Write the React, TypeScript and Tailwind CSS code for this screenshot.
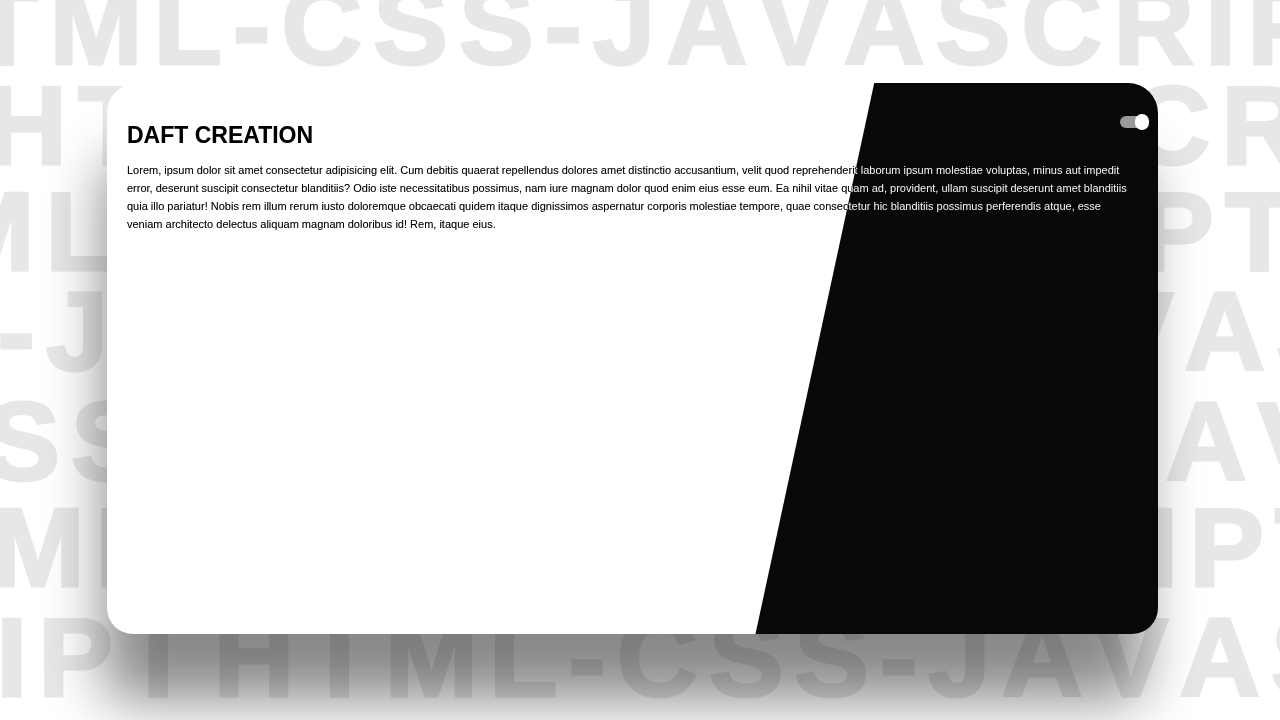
import { useState } from 'react';
import clsx from 'clsx';

const FULL = 'HTML-CSS-JAVASCRIPT';

const rows = [
  { parts: [FULL], className: '-ml-[122px] mb-5' },
  { parts: [FULL], className: '-ml-[14px] mb-[26px]' },
  { parts: [FULL], className: '-ml-[230px] mb-5' },
  { parts: [FULL, 'JAVASCRIPT'], className: '-ml-[669px] mb-[30px] gap-[68px]' },
  { parts: [FULL, 'JAVASCRIPT'], className: '-ml-[510px] mb-[26px] gap-[68px]' },
  { parts: [FULL], className: '-ml-[180px] mb-[30px]' },
  { parts: ['JAVASCRIPT', FULL], className: '-ml-[616px] gap-[10px]' },
];

function Backdrop() {
  return (
    <div
      aria-hidden="true"
      className="absolute inset-0 overflow-hidden select-none flex flex-col -mt-[14px] text-[#e7e7e7] font-bold text-[112px] leading-[80px] tracking-[11px] [font-kerning:none] [-webkit-text-stroke:3px_#e7e7e7] [stroke-linejoin:round]"
    >
      {rows.map((row, i) => (
        <div key={i} className={clsx('flex whitespace-nowrap', row.className)}>
          {row.parts.map((part, j) => (
            <span key={j}>{part}</span>
          ))}
        </div>
      ))}
    </div>
  );
}

function ThemeToggle({
  checked,
  onChange,
}: {
  checked: boolean;
  onChange: (checked: boolean) => void;
}) {
  return (
    <input
      type="checkbox"
      role="switch"
      aria-label="Dark mode"
      checked={checked}
      onChange={(e) => onChange(e.target.checked)}
      className="appearance-none relative shrink-0 cursor-pointer w-7 h-3 rounded-full bg-[#999] before:absolute before:-top-0.5 before:left-0 before:w-3.5 before:h-4 before:rounded-full before:bg-white before:transition-transform checked:before:translate-x-[15px]"
    />
  );
}

export default function App() {
  const [dark, setDark] = useState(true);

  return (
    <main className="relative min-h-screen flex bg-white pt-[83px] pr-[122px] pb-[86px] pl-[107px] font-['Liberation_Sans',Arial,sans-serif]">
      <Backdrop />
      <section className="relative isolate flex-1 overflow-hidden rounded-t-[30px] rounded-b-[26px] bg-white shadow-[-9px_72px_56px_-6px_rgba(10,10,16,0.48)]">
        <div
          className={clsx(
            'absolute inset-0 bg-[#080808] transition-[clip-path] duration-700',
            dark
              ? '[clip-path:polygon(73%_0,100%_0,100%_100%,61.7%_100%)]'
              : '[clip-path:polygon(112%_0,100%_0,100%_100%,100%_100%)]'
          )}
        />
        {/* difference blending inverts the copy where the dark panel slides under it */}
        <div className="relative mix-blend-difference text-white pt-9 pl-5 pr-6">
          <h1 className="text-[23px] leading-8 font-bold">DAFT CREATION</h1>
          <p className="mt-2.5 text-[11px] leading-[18px]">
            Lorem, ipsum dolor sit amet consectetur adipisicing elit. Cum debitis
            quaerat repellendus dolores amet distinctio accusantium, velit quod
            reprehenderit laborum ipsum molestiae voluptas, minus aut impedit
            error, deserunt suscipit consectetur blanditiis? Odio iste
            necessitatibus possimus, nam iure magnam dolor quod enim eius esse
            eum. Ea nihil vitae quam ad, provident, ullam suscipit deserunt amet
            blanditiis quia illo pariatur! Nobis rem illum rerum iusto doloremque
            obcaecati quidem itaque dignissimos aspernatur corporis molestiae
            tempore, quae consectetur hic blanditiis possimus perferendis atque,
            esse veniam architecto delectus aliquam magnam doloribus id! Rem,
            itaque eius.
          </p>
        </div>
        <div className="absolute top-[33px] right-[10px] flex">
          <ThemeToggle checked={dark} onChange={setDark} />
        </div>
      </section>
    </main>
  );
}
